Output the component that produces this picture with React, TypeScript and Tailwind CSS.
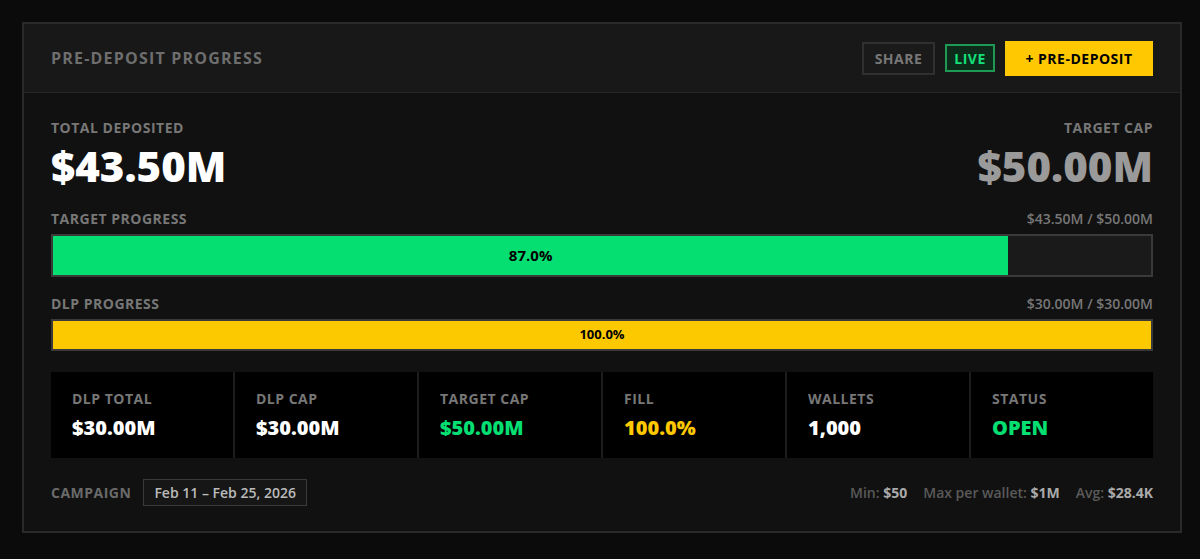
const stats = [
  { label: "DLP TOTAL", value: "$30.00M", tone: "text-white" },
  { label: "DLP CAP", value: "$30.00M", tone: "text-white" },
  { label: "TARGET CAP", value: "$50.00M", tone: "text-[#05df72]" },
  { label: "FILL", value: "100.0%", tone: "text-[#ffc800]" },
  { label: "WALLETS", value: "1,000", tone: "text-white" },
  { label: "STATUS", value: "OPEN", tone: "text-[#05df72]" },
];

function ProgressBar({
  label,
  amount,
  pct,
  fill,
  height,
  textSize,
}: {
  label: string;
  amount: string;
  pct: number;
  fill: string;
  height: string;
  textSize: string;
}) {
  return (
    <div>
      <div className="flex items-end justify-between leading-[18px]">
        <span className="text-[14px] font-bold tracking-[0.5px] text-[#777]">{label}</span>
        <span className="text-[14px] font-semibold text-[#777]">{amount}</span>
      </div>
      <div className={`mt-[6px] border-2 border-[#3a3a3a] bg-[#1a1a1a] ${height}`}>
        <div
          className={`flex h-full items-center justify-center ${fill}`}
          style={{ width: `${pct}%` }}
        >
          <span className={`font-bold text-black ${textSize}`}>{pct.toFixed(1)}%</span>
        </div>
      </div>
    </div>
  );
}

export default function App() {
  return (
    <div
      className="min-h-[559px] bg-[#0b0b0b] pt-[22px] pl-[22px]"
      style={{ fontFamily: '"Open Sans", "Noto Sans", sans-serif' }}
    >
      <div className="w-[1160px] border-2 border-[#2a2a2a] bg-[#111111]">
        {/* header */}
        <div className="flex h-[69px] items-center justify-between border-b border-[#262626] bg-[#181818] px-[27px]">
          <h2 className="text-[16px] font-bold tracking-[1.2px] text-[#6e6e6e]">PRE-DEPOSIT PROGRESS</h2>
          <div className="flex items-center gap-[10px]">
            <button
              type="button"
              className="h-[33px] w-[73px] border-2 border-[#303030] bg-[#1a1a1a] text-[14px] font-bold tracking-[0.5px] text-[#777]"
            >
              SHARE
            </button>
            <span className="flex h-[28px] w-[50px] items-center justify-center border-2 border-[#1f9a55] bg-[#0e2a1b] text-[14px] font-bold tracking-[0.5px] text-[#14e07a]">
              LIVE
            </span>
            <button
              type="button"
              className="h-[35px] w-[148px] bg-[#ffc800] text-[14px] font-bold tracking-[0.5px] text-black"
            >
              + PRE-DEPOSIT
            </button>
          </div>
        </div>

        {/* body */}
        <div className="px-[27px] pt-[26px] pb-[25px]">
          <div className="flex items-start justify-between">
            <div>
              <div className="text-[14px] font-bold leading-[18px] tracking-[0.5px] text-[#777]">TOTAL DEPOSITED</div>
              <div className="mt-[4px] text-[42px] font-extrabold leading-[50px] text-white">$43.50M</div>
            </div>
            <div className="text-right">
              <div className="text-[14px] font-bold leading-[18px] tracking-[0.5px] text-[#777]">TARGET CAP</div>
              <div className="mt-[4px] text-[42px] font-extrabold leading-[50px] text-[#9a9a9a]">$50.00M</div>
            </div>
          </div>

          <div className="mt-[19px]">
            <ProgressBar
              label="TARGET PROGRESS"
              amount="$43.50M / $50.00M"
              pct={87}
              fill="bg-[#05df72]"
              height="h-[43px]"
              textSize="text-[15px]"
            />
          </div>
          <div className="mt-[18px]">
            <ProgressBar
              label="DLP PROGRESS"
              amount="$30.00M / $30.00M"
              pct={100}
              fill="bg-[#fcc800]"
              height="h-[32px]"
              textSize="text-[13px]"
            />
          </div>

          <div className="mt-[21px] grid h-[86px] grid-cols-6 gap-[2px] bg-[#1c1c1c]">
            {stats.map((s) => (
              <div key={s.label} className="bg-black px-[21px] pt-[17px]">
                <div className="text-[14px] font-bold leading-[20px] tracking-[0.5px] text-[#777]">{s.label}</div>
                <div className={`mt-[6px] text-[20px] font-extrabold leading-[26px] ${s.tone}`}>{s.value}</div>
              </div>
            ))}
          </div>

          <div className="mt-[21px] flex items-center justify-between">
            <div className="flex items-center gap-[12px]">
              <span className="text-[14px] font-bold tracking-[0.5px] text-[#6a6a6a]">CAMPAIGN</span>
              <span className="flex h-[27px] items-center border border-[#3a3a3a] bg-[#161616] px-[10px] text-[14px] font-semibold text-[#bbbbbb]">
                Feb 11 – Feb 25, 2026
              </span>
            </div>
            <div className="flex items-center gap-[16px] text-[14px] font-semibold">
              <span className="text-[#5a5a5a]">
                Min: <span className="font-bold text-[#aaaaaa]">$50</span>
              </span>
              <span className="text-[#5a5a5a]">
                Max per wallet: <span className="font-bold text-[#aaaaaa]">$1M</span>
              </span>
              <span className="text-[#5a5a5a]">
                Avg: <span className="font-bold text-[#aaaaaa]">$28.4K</span>
              </span>
            </div>
          </div>
        </div>
      </div>
    </div>
  );
}
